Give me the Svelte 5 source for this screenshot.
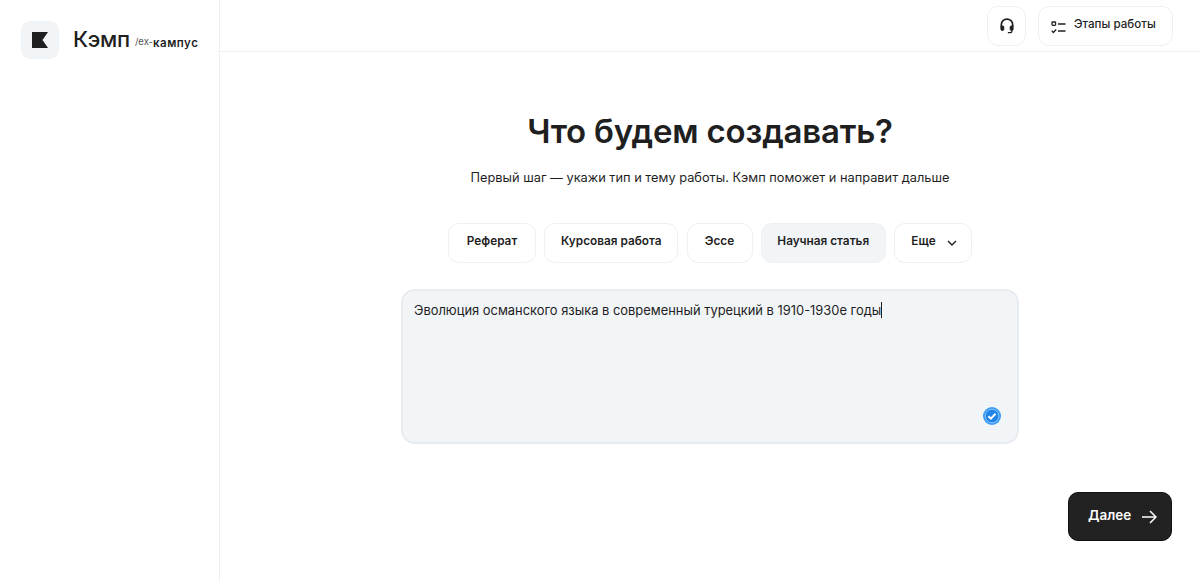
<script>
  const types = [
    { label: "Реферат", width: 88 },
    { label: "Курсовая работа", width: 134 },
    { label: "Эссе", width: 66 },
    { label: "Научная статья", width: 125 },
  ];
  let active = "Научная статья";
  let topic = "Эволюция османского языка в современный турецкий в 1910-1930е годы";
</script>

<div class="page">
  <aside class="sidebar">
    <div class="logo">
      <div class="logo-mark">
        <svg width="18" height="18" viewBox="0 0 18 18"><path d="M1 1h16l-5.5 8L17 17H1z" fill="#1f1f1f" /></svg>
      </div>
      <span class="logo-name">Кэмп</span>
      <span class="logo-ex">/ex-</span><span class="logo-sub">кампус</span>
    </div>
  </aside>

  <div class="main">
    <header class="topbar">
      <button class="ghost square" aria-label="Поддержка">
        <svg width="14" height="16" viewBox="0 0 16 18" fill="none" stroke="#1f1f1f" stroke-width="2">
          <path d="M1.5 10V7.5a6.5 6.5 0 0 1 13 0V10" />
          <rect x="1" y="9" width="3.4" height="5" rx="1.2" fill="#1f1f1f" stroke-width="1" />
          <rect x="11.6" y="9" width="3.4" height="5" rx="1.2" fill="#1f1f1f" stroke-width="1" />
          <path d="M13.5 14v1.2a1.3 1.3 0 0 1-1.3 1.3H9" stroke-width="1.5" />
        </svg>
      </button>
      <button class="ghost steps">
        <svg width="15" height="13" viewBox="0 0 15 13" fill="none" stroke="#1f1f1f" stroke-width="1.3">
          <rect x="1" y="1" width="3.6" height="3.4" rx="0.8" />
          <path d="M7 3h7.5M7 10h7.5M.8 9.8l1.6 1.7 2.8-3" />
        </svg>
        <span>Этапы работы</span>
      </button>
    </header>

    <main class="content">
      <h1>Что будем создавать?</h1>
      <p class="lead">Первый шаг — укажи тип и тему работы. Кэмп поможет и направит дальше</p>

      <div class="types">
        {#each types as t}
          <button class="pill" class:active={t.label === active} style="width: {t.width}px">{t.label}</button>
        {/each}
        <button class="pill more">
          Еще
          <svg width="10" height="6" viewBox="0 0 10 6" fill="none" stroke="#1f1f1f" stroke-width="1.4"><path d="M1 1l4 4 4-4" /></svg>
        </button>
      </div>

      <div class="topic">
        <span class="topic-text">{topic}</span><span class="caret"></span>
        <svg class="ok" width="18" height="18" viewBox="0 0 18 18">
          <circle cx="9" cy="9" r="9" fill="#3b9bf5" />
          <circle cx="9" cy="9" r="6.8" fill="#1f86e8" stroke="#a5d2fb" stroke-width="0.8" />
          <path d="M5.4 9.2l2.5 2.4 4.6-4.8" fill="none" stroke="#fff" stroke-width="2" />
        </svg>
      </div>

      <button class="next">
        <span class="next-label">Далее</span>
        <svg width="16" height="14" viewBox="0 0 16 14" fill="none" stroke="#fff" stroke-width="1.5"><path d="M1 7h14M9 1l6 6-6 6" /></svg>
      </button>
    </main>
  </div>
</div>

<style>
  :global(body) {
    margin: 0;
    background: #fff;
    color: #1f1f1f;
    font-family: Inter, "Noto Sans", sans-serif;
  }

  .page {
    display: flex;
    height: 582px;
    overflow: hidden;
  }

  .sidebar {
    width: 220px;
    flex: none;
    box-sizing: border-box;
    border-right: 1px solid #edf0f4;
    padding: 21px 0 0 21px;
  }

  .logo {
    display: flex;
    align-items: center;
  }

  .logo-mark {
    width: 38px;
    height: 38px;
    border-radius: 9px;
    background: #f2f5f8;
    display: flex;
    align-items: center;
    justify-content: center;
    margin-right: 14px;
  }

  .logo-name {
    font-size: 22px;
    font-weight: 500;
    letter-spacing: -0.3px;
    margin-right: 5px;
    margin-top: -2px;
  }

  .logo-ex {
    font-size: 9.5px;
    color: #555;
    margin-top: 3px;
  }

  .logo-sub {
    font-size: 11.5px;
    font-weight: 600;
    letter-spacing: 0.5px;
    margin-top: 5px;
  }

  .main {
    flex: 1;
    min-width: 0;
    display: flex;
    flex-direction: column;
  }

  .topbar {
    height: 52px;
    box-sizing: border-box;
    flex: none;
    border-bottom: 1px solid #edf0f4;
    display: flex;
    justify-content: flex-end;
    align-items: flex-start;
    gap: 12px;
    padding: 6px 27px 0 0;
  }

  button {
    font: inherit;
    color: inherit;
    cursor: pointer;
  }

  .ghost {
    height: 40px;
    background: #fff;
    border: 1px solid #edf0f4;
    border-radius: 11px;
    display: flex;
    align-items: center;
    justify-content: center;
  }

  .square {
    width: 39px;
    padding: 0;
  }

  .steps {
    width: 135px;
    justify-content: flex-start;
    gap: 8px;
    font-size: 11.6px;
    font-weight: 500;
    padding: 0 0 0 12px;
  }

  .steps span {
    margin-top: -4px;
  }

  .steps svg {
    margin-top: 2px;
  }

  .content {
    flex: 1;
    display: flex;
    flex-direction: column;
    align-items: center;
    padding-top: 57px;
  }

  h1 {
    margin: 0;
    font-size: 33px;
    line-height: 44px;
    font-weight: 600;
    letter-spacing: -0.2px;
  }

  .lead {
    margin: 15px 0 0;
    font-size: 12.8px;
    line-height: 20px;
  }

  .types {
    display: flex;
    gap: 8.25px;
    margin-top: 35px;
  }

  .pill {
    height: 40px;
    padding: 0 0 4px;
    background: #fff;
    border: 1px solid #edf0f4;
    border-radius: 11px;
    font-size: 11.8px;
    font-weight: 600;
    white-space: nowrap;
  }

  .pill.active {
    background: #f2f5f8;
  }

  .more {
    width: 78px;
    display: flex;
    align-items: center;
    justify-content: center;
    gap: 11px;
    padding-left: 2px;
  }

  .more svg {
    margin-top: 4px;
  }

  .topic {
    position: relative;
    margin-top: 26px;
    width: 618px;
    height: 155px;
    box-sizing: border-box;
    padding: 10.5px 11px;
    background: #f2f5f8;
    border: 2px solid #e8ecf0;
    border-radius: 14px;
    font-size: 12.9px;
    line-height: 18px;
  }

  .caret {
    display: inline-block;
    width: 1px;
    height: 16px;
    background: #1f1f1f;
    vertical-align: -3px;
  }

  .ok {
    position: absolute;
    right: 16px;
    bottom: 17px;
  }

  .next {
    align-self: flex-end;
    margin: 48px 28px 0 0;
    width: 104px;
    height: 49px;
    padding: 0 0 0 19px;
    display: flex;
    align-items: center;
    gap: 10px;
    background: #222;
    color: #fff;
    border: 1px solid #111;
    border-radius: 10px;
    font-size: 13.5px;
    font-weight: 600;
  }

  .next-label {
    margin-top: -3px;
  }
</style>
